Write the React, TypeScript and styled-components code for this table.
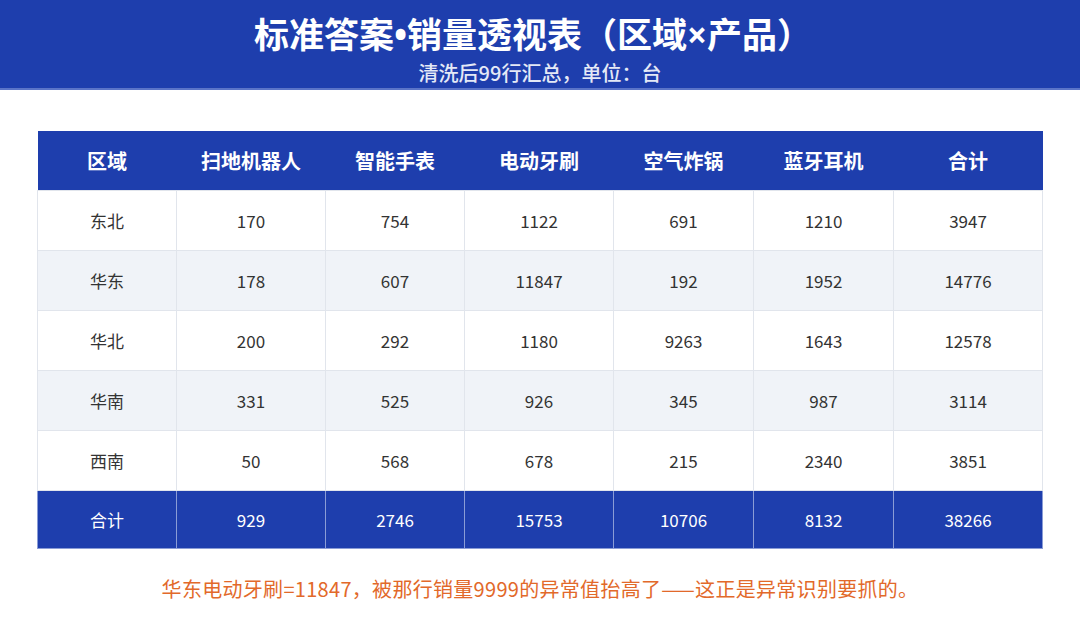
import React from 'react';
import styled, { createGlobalStyle } from 'styled-components';

const GlobalStyle = createGlobalStyle`
  html, body {
    margin: 0;
    padding: 0;
    background: #ffffff;
  }
  body {
    font-family: 'Noto Sans CJK SC', 'Noto Sans', sans-serif;
  }
`;

const products = ['扫地机器人', '智能手表', '电动牙刷', '空气炸锅', '蓝牙耳机'];

const rows: { region: string; values: number[] }[] = [
  { region: '东北', values: [170, 754, 1122, 691, 1210] },
  { region: '华东', values: [178, 607, 11847, 192, 1952] },
  { region: '华北', values: [200, 292, 1180, 9263, 1643] },
  { region: '华南', values: [331, 525, 926, 345, 987] },
  { region: '西南', values: [50, 568, 678, 215, 2340] },
];

const colWidths = [139, 149, 139, 149, 140, 140, 149];

const sum = (list: number[]) => list.reduce((a, b) => a + b, 0);

const App: React.FC = (): JSX.Element => {
  const totals = products.map((_, i) => sum(rows.map((r) => r.values[i])));

  return (
    <StPage>
      <GlobalStyle />
      <StBanner>
        <h1>标准答案•销量透视表（区域×产品）</h1>
        <p>清洗后99行汇总，单位：台</p>
      </StBanner>

      <StTable>
        <colgroup>
          {colWidths.map((w, i) => (
            <col key={i} width={w} />
          ))}
        </colgroup>
        <thead>
          <tr>
            <th>区域</th>
            {products.map((p) => (
              <th key={p}>{p}</th>
            ))}
            <th>合计</th>
          </tr>
        </thead>
        <tbody>
          {rows.map((row, index) => (
            <StRow key={row.region} $striped={index % 2 === 1}>
              <td>{row.region}</td>
              {row.values.map((v, i) => (
                <td key={i}>{v}</td>
              ))}
              <td>{sum(row.values)}</td>
            </StRow>
          ))}
          <StTotalRow>
            <td>合计</td>
            {totals.map((v, i) => (
              <td key={i}>{v}</td>
            ))}
            <td>{sum(totals)}</td>
          </StTotalRow>
        </tbody>
      </StTable>

      <StNote>
        华东电动牙刷=11847，被那行销量9999的异常值抬高了——这正是异常识别要抓的。
      </StNote>
    </StPage>
  );
};

export default App;

const StPage = styled.div`
  width: 1080px;
  height: 624px;
  display: flex;
  flex-direction: column;
  align-items: center;
  overflow: hidden;
`;

const StBanner = styled.header`
  width: 100%;
  height: 90px;
  box-sizing: border-box;
  background-color: #1e3ead;
  border-bottom: 2px solid #5b74c8;
  display: flex;
  flex-direction: column;
  align-items: center;
  padding-top: 12px;

  h1 {
    margin: 0 14px 0 0;
    font-family: 'Noto Sans', 'Noto Sans CJK SC', sans-serif;
    font-size: 35px;
    line-height: 45px;
    font-weight: 700;
    color: #ffffff;
  }

  p {
    margin: 3px 0 0 0;
    font-size: 20px;
    line-height: 26px;
    font-weight: 500;
    color: #e4e9f6;
  }
`;

const StTable = styled.table`
  margin-top: 41px;
  width: 1005px;
  border-collapse: collapse;
  table-layout: fixed;

  th {
    height: 59px;
    padding: 0;
    background-color: #1e3ead;
    color: #ffffff;
    font-size: 20px;
    font-weight: 700;
    text-align: center;
  }

  td {
    height: 59px;
    padding: 0;
    text-align: center;
    font-size: 17px;
    color: #333333;
    border: 1px solid #e1e5ec;
  }
`;

const StRow = styled.tr<{ $striped: boolean }>`
  background-color: ${({ $striped }) => ($striped ? '#f0f3f8' : '#ffffff')};
`;

const StTotalRow = styled.tr`
  background-color: #1e3ead;

  td {
    height: 57px;
    color: #ffffff;
    border: 1px solid #8a9cd6;
  }
`;

const StNote = styled.p`
  margin: 25px 0 0 0;
  font-size: 20px;
  line-height: 30px;
  letter-spacing: 0.3px;
  color: #e2692a;
`;
